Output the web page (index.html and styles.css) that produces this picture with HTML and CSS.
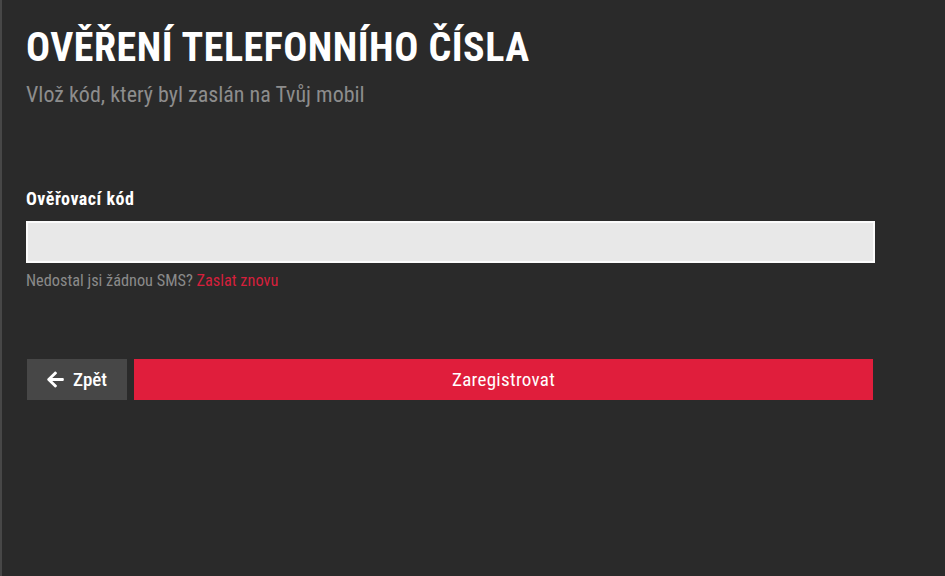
FILE: index.html
```html
<!DOCTYPE html>
<html lang="cs">
<head>
<meta charset="utf-8">
<title>Ověření telefonního čísla</title>
<link rel="stylesheet" href="styles.css">
</head>
<body>
<div class="page">
  <main class="panel">
    <h1 class="title">OVĚŘENÍ TELEFONNÍHO ČÍSLA</h1>
    <p class="subtitle">Vlož kód, který byl zaslán na Tvůj mobil</p>
    <form class="form">
      <label class="label" for="code">Ověřovací kód</label>
      <input class="input" id="code" type="text">
      <p class="help">Nedostal jsi žádnou SMS? <a class="resend" href="#">Zaslat znovu</a></p>
      <div class="actions">
        <button type="button" class="btn btn-back">
          <svg class="arrow" viewBox="0 0 448 512" width="17" height="19" aria-hidden="true">
            <path fill="#fff" d="M257.5 445.1l-22.2 22.2c-9.4 9.4-24.6 9.4-33.9 0L7 273c-9.4-9.4-9.4-24.6 0-33.9L201.4 44.7c9.4-9.4 24.6-9.4 33.9 0l22.2 22.2c9.5 9.5 9.3 25-.4 34.3L136.6 216H424c13.3 0 24 10.7 24 24v32c0 13.3-10.7 24-24 24H136.6l120.5 114.8c9.8 9.3 10 24.8.4 34.3z"/>
          </svg>
          <span>Zpět</span>
        </button>
        <button type="button" class="btn btn-primary">Zaregistrovat</button>
      </div>
    </form>
  </main>
</div>
</body>
</html>
```
FILE: styles.css
```css
html, body {
  margin: 0;
  padding: 0;
  height: 100%;
  background: #2a2a2a;
}
body {
  font-family: "Roboto", "Liberation Sans", sans-serif;
  font-stretch: 75%;
  color: #fff;
}
.page {
  min-height: 100%;
  border-left: 2px solid #474747;
  box-sizing: border-box;
}
.panel {
  padding: 25px 0 0 24px;
  width: 850px;
}
.title {
  margin: 0;
  font-size: 40px;
  font-weight: 700;
  line-height: 46px;
  letter-spacing: 0.5px;
}
.subtitle {
  margin: 11px 0 0;
  font-size: 22px;
  line-height: 26px;
  color: #8d8d8d;
}
.form {
  display: flex;
  flex-direction: column;
  margin-top: 80px;
}
.label {
  font-size: 18px;
  font-weight: 700;
  line-height: 22px;
  letter-spacing: 0.5px;
  color: #fff;
}
.input {
  margin-top: 11px;
  height: 42px;
  box-sizing: border-box;
  width: 849px;
  background: #e8e8e8;
  border: 2px solid #fbfbfb;
  outline: none;
}
.help {
  margin: 8px 0 0;
  font-size: 16.3px;
  line-height: 20px;
  color: #8a8a8a;
}
.resend {
  color: #d5203c;
  text-decoration: none;
}
.actions {
  display: flex;
  gap: 7px;
  margin-top: 68px;
  padding-left: 1px;
}
.btn {
  height: 41px;
  border: 0;
  padding: 0;
  font-family: inherit;
  font-stretch: 75%;
  font-size: 19px;
  color: #fff;
  cursor: pointer;
}
.btn-back {
  width: 100px;
  background: #474747;
  display: flex;
  align-items: center;
  justify-content: center;
  gap: 9px;
  font-weight: 500;
}
.arrow {
  display: block;
}
.btn-primary {
  width: 739px;
  background: #e01e3c;
  font-weight: 400;
  letter-spacing: 0.3px;
}
```
